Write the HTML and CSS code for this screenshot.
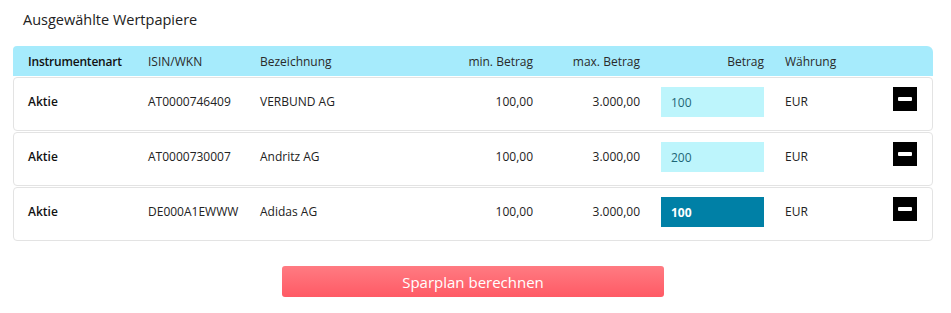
FILE: index.html
```html
<!DOCTYPE html>
<html lang="de">
<head>
<meta charset="utf-8">
<title>Ausgewählte Wertpapiere</title>
<link rel="stylesheet" href="styles.css">
</head>
<body>
<div class="wrap">
  <h2 class="title">Ausgewählte Wertpapiere</h2>
  <div class="table">
    <div class="head grid">
      <div class="c-type">Instrumentenart</div>
      <div>ISIN/WKN</div>
      <div>Bezeichnung</div>
      <div class="num">min. Betrag</div>
      <div class="num">max. Betrag</div>
      <div class="num">Betrag</div>
      <div class="cur">Währung</div>
      <div></div>
    </div>
    <div class="row grid">
      <div class="c-type">Aktie</div>
      <div>AT0000746409</div>
      <div>VERBUND AG</div>
      <div class="num">100,00</div>
      <div class="num">3.000,00</div>
      <div class="amt"><input class="inp" type="text" value="100"></div>
      <div class="cur">EUR</div>
      <button class="rm" type="button" aria-label="Entfernen"><span></span></button>
    </div>
    <div class="row grid">
      <div class="c-type">Aktie</div>
      <div>AT0000730007</div>
      <div>Andritz AG</div>
      <div class="num">100,00</div>
      <div class="num">3.000,00</div>
      <div class="amt"><input class="inp" type="text" value="200"></div>
      <div class="cur">EUR</div>
      <button class="rm" type="button" aria-label="Entfernen"><span></span></button>
    </div>
    <div class="row grid">
      <div class="c-type">Aktie</div>
      <div>DE000A1EWWW</div>
      <div>Adidas AG</div>
      <div class="num">100,00</div>
      <div class="num">3.000,00</div>
      <div class="amt"><input class="inp active" type="text" value="100"></div>
      <div class="cur">EUR</div>
      <button class="rm" type="button" aria-label="Entfernen"><span></span></button>
    </div>
  </div>
  <div class="actions">
    <button class="calc" type="button">Sparplan berechnen</button>
  </div>
</div>
</body>
</html>
```
FILE: styles.css
```css
* { box-sizing: border-box; }
html, body { margin: 0; padding: 0; background: #fff; }
body {
  font-family: "Open Sans", "Noto Sans", sans-serif;
  font-size: 12px;
  color: #222;
}
.wrap {
  width: 920px;
  margin-left: 13px;
}
.title {
  margin: 0;
  padding: 10px 0 0 10px;
  height: 46px;
  font-size: 14.5px;
  font-weight: 400;
  line-height: 20px;
  color: #222;
}
.grid {
  display: grid;
  grid-template-columns: 120px 112px 173px 100px 107px 124px 129px 24px;
  align-items: center;
  padding-left: 15px;
}
.head {
  height: 30px;
  background: #a6ebfc;
  border-radius: 4px 6px 0 0;
  color: #2a2a2a;
}
.head .c-type { font-weight: 600; color: #111; letter-spacing: -0.2px; }
.row {
  height: 54px;
  margin-top: 1px;
  border: 1px solid #e3e3e3;
  border-radius: 4px;
  padding-left: 14px;
  padding-top: 9px;
  padding-bottom: 13px;
  align-items: start;
}
.row > div { line-height: 30px; }
.row .c-type { font-weight: 600; color: #111; }
.num { text-align: right; }
.cur { padding-left: 21px; }
.amt { display: flex; justify-content: flex-end; }
.inp {
  width: 103px;
  height: 30px;
  border: 0;
  margin: 0;
  padding: 0 0 0 10px;
  background: #bdf5fc;
  color: #1d6676;
  font-family: inherit;
  font-size: 12px;
  outline: none;
}
.inp.active {
  background: #0080a6;
  color: #fff;
  font-weight: 700;
}
.rm {
  width: 24px;
  height: 24px;
  margin: 0;
  padding: 0;
  border: 0;
  background: #000;
  display: flex;
  align-items: center;
  justify-content: center;
  cursor: pointer;
}
.rm span {
  display: block;
  width: 14px;
  height: 4px;
  background: #fff;
  border-radius: 1px;
}
.actions {
  display: flex;
  justify-content: center;
  padding-top: 25px;
}
.calc {
  width: 382px;
  height: 31px;
  border: 0;
  border-radius: 3px;
  background: linear-gradient(#ff7b82, #ff5a65);
  color: #fff;
  font-family: inherit;
  font-size: 15px;
  cursor: pointer;
}
```
